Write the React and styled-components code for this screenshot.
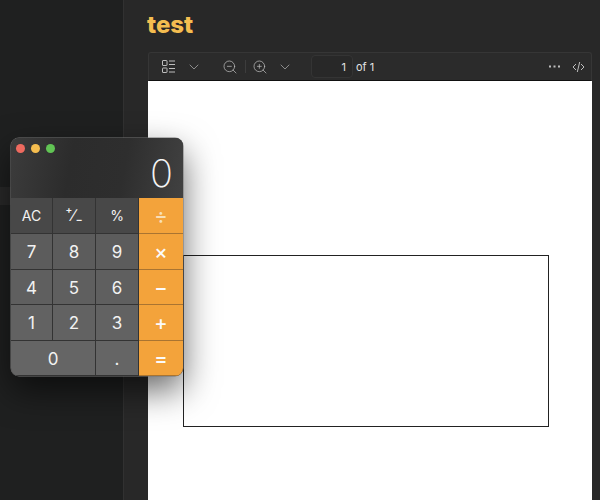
import React from "react";
import styled, { createGlobalStyle } from "styled-components";
import { ChevronDown, ZoomIn, ZoomOut } from "lucide-react";

const GlobalStyle = createGlobalStyle`
  html, body {
    margin: 0;
    padding: 0;
    background: #282828;
  }
  * {
    box-sizing: border-box;
  }
`;

const Page = styled.div`
  position: relative;
  width: 600px;
  height: 500px;
  overflow: hidden;
  display: flex;
  font-family: Inter, "Liberation Sans", sans-serif;
  background: #282828;
`;

const Sidebar = styled.div`
  width: 124px;
  height: 100%;
  flex: none;
  padding-top: 187px;
  background: #1f2020;
  border-right: 1px solid #313131;
`;

const SidebarRow = styled.div`
  height: 18px;
  background: #2a2a2a;
`;

const Main = styled.div`
  flex: 1;
  display: flex;
  flex-direction: column;
  padding: 0 8px 0 24px;
  min-width: 0;
`;

const Title = styled.h1`
  margin: 0 0 0 -1px;
  height: 52px;
  padding-top: 10px;
  font-size: 24px;
  line-height: 30px;
  font-weight: 800;
  color: #f4bd50;
`;

const Toolbar = styled.div`
  height: 29px;
  flex: none;
  display: flex;
  align-items: center;
  padding: 0 5px 0 11px;
  background: #2b2b2b;
  border: 1px solid #363636;
  border-bottom: 1px solid #111;
  border-radius: 3px 3px 0 0;
  color: #bdbdbd;
`;

const ToolIcon = styled.span`
  display: flex;
  align-items: center;
  justify-content: center;
  flex: none;
  width: 16px;
  margin-left: ${(p) => p.$ml || 0}px;
`;

const Divider = styled.span`
  width: 1px;
  height: 13px;
  flex: none;
  margin-left: 7px;
  background: #3d3d3d;
`;

const PageInput = styled.div`
  width: 42px;
  height: 23px;
  flex: none;
  margin-left: 18px;
  padding-right: 6px;
  display: flex;
  align-items: center;
  justify-content: flex-end;
  font-size: 11px;
  color: #e2e2e2;
  background: #282828;
  border: 1px solid #343434;
  border-radius: 4px;
`;

const PageCount = styled.span`
  margin-left: 3px;
  font-size: 11px;
  color: #e2e2e2;
`;

const Spacer = styled.span`
  flex: 1;
`;

const Sheet = styled.div`
  flex: 1;
  padding: 174px 43px 0 35px;
  background: #fff;
`;

const DrawnBox = styled.div`
  height: 172px;
  border: 1px solid #222;
`;

const CalcWindow = styled.div`
  position: absolute;
  left: 11px;
  top: 138px;
  width: 172px;
  height: 238px;
  display: flex;
  flex-direction: column;
  overflow: hidden;
  border-radius: 8px;
  background: #333;
  box-shadow: 0 0 0 0.5px #777, 0 14px 34px rgba(0, 0, 0, 0.6);
`;

const CalcHeader = styled.div`
  height: 60px;
  flex: none;
  display: flex;
  flex-direction: column;
  background: linear-gradient(100deg, #3c3c3c 0%, #2c2c2c 35%, #2e2e2e 65%, #414141 100%);
`;

const Lights = styled.div`
  display: flex;
  gap: 6px;
  padding: 6px 0 0 5px;
`;

const Light = styled.span`
  width: 9px;
  height: 9px;
  border-radius: 50%;
  background: ${(p) => p.$color};
`;

const Display = styled.div`
  flex: 1;
  padding-right: 10px;
  margin-top: -1px;
  text-align: right;
  font-size: 38px;
  line-height: 43px;
  font-weight: 200;
  color: #f4f4f4;
`;

const Keys = styled.div`
  flex: 1;
  display: grid;
  grid-template-columns: 42px 43px 43px 44px;
  grid-template-rows: 36px 36px 35px 36px 35px;
`;

const Key = styled.div`
  display: flex;
  align-items: center;
  justify-content: center;
  grid-column: span ${(p) => p.$span || 1};
  padding-top: ${(p) => (p.$size ? 0 : 1)}px;
  font-size: ${(p) => p.$size || 17}px;
  font-weight: 400;
  color: #f2f2f2;
  background: ${(p) => p.$bg};
  border-right: 1px solid #333;
  border-bottom: 1px solid #333;
`;

const OpKey = styled(Key)`
  padding-top: 1px;
  font-size: 20px;
  font-weight: 500;
  color: ${(p) => p.$ink || "#fbfbfb"};
  border-right: 0;
  background: #f3a33b;
  border-bottom: 1px solid #a97431;
`;

const keyRows = [
  [
    { id: "ac", label: "AC", size: 14, bg: "#484848" },
    { id: "sign", label: "⁺∕₋", size: 17, bg: "#484848" },
    { id: "pct", label: "%", size: 14, bg: "#484848" },
    { id: "div", label: "÷", op: true, ink: "#f8dfb6" },
  ],
  [
    { id: "7", label: "7", bg: "#5c5c5c" },
    { id: "8", label: "8", bg: "#5c5c5c" },
    { id: "9", label: "9", bg: "#5c5c5c" },
    { id: "mul", label: "×", op: true },
  ],
  [
    { id: "4", label: "4", bg: "#5f5f5f" },
    { id: "5", label: "5", bg: "#5f5f5f" },
    { id: "6", label: "6", bg: "#5f5f5f" },
    { id: "sub", label: "−", op: true },
  ],
  [
    { id: "1", label: "1", bg: "#626262" },
    { id: "2", label: "2", bg: "#626262" },
    { id: "3", label: "3", bg: "#626262" },
    { id: "add", label: "+", op: true },
  ],
  [
    { id: "0", label: "0", bg: "#656565", span: 2 },
    { id: "dot", label: ".", bg: "#656565" },
    { id: "eq", label: "=", op: true },
  ],
];

const ThumbnailsIcon = () => (
  <svg width="13" height="13" viewBox="0 0 13 13" fill="none" stroke="currentColor" strokeWidth="1">
    <rect x="0.5" y="0.5" width="4.5" height="5" rx="0.5" />
    <rect x="0.5" y="8" width="4.5" height="4.5" rx="0.5" />
    <path d="M7 1h6M7 4.5h6M7 8.5h6M7 12h6" />
  </svg>
);

const MoreIcon = () => (
  <svg width="11" height="3" viewBox="0 0 11 3" fill="currentColor">
    <rect x="0" y="0.5" width="2" height="2" />
    <rect x="4.5" y="0.5" width="2" height="2" />
    <rect x="9" y="0.5" width="2" height="2" />
  </svg>
);

const CodeIcon = () => (
  <svg width="13" height="12" viewBox="0 0 13 12" fill="none" stroke="currentColor" strokeWidth="1">
    <path d="M4 3 1 6l3 3M9 3l3 3-3 3M7.7 1 5.3 11" />
  </svg>
);

const App = () => {
  return (
    <>
      <GlobalStyle />
      <Page>
        <Sidebar>
          <SidebarRow />
        </Sidebar>
        <Main>
          <Title>test</Title>
          <Toolbar>
            <ToolIcon>
              <ThumbnailsIcon />
            </ToolIcon>
            <ToolIcon $ml={10}>
              <ChevronDown size={18} strokeWidth={1} />
            </ToolIcon>
            <ToolIcon $ml={20}>
              <ZoomOut size={16} strokeWidth={1.1} />
            </ToolIcon>
            <Divider />
            <ToolIcon $ml={6}>
              <ZoomIn size={16} strokeWidth={1.1} />
            </ToolIcon>
            <ToolIcon $ml={9}>
              <ChevronDown size={18} strokeWidth={1} />
            </ToolIcon>
            <PageInput>1</PageInput>
            <PageCount>of 1</PageCount>
            <Spacer />
            <ToolIcon>
              <MoreIcon />
            </ToolIcon>
            <ToolIcon $ml={8}>
              <CodeIcon />
            </ToolIcon>
          </Toolbar>
          <Sheet>
            <DrawnBox />
          </Sheet>
        </Main>
        <CalcWindow>
          <CalcHeader>
            <Lights>
              <Light $color="#ee6a5f" />
              <Light $color="#f5bd4f" />
              <Light $color="#61c454" />
            </Lights>
            <Display>0</Display>
          </CalcHeader>
          <Keys>
            {keyRows.flat().map((key) =>
              key.op ? (
                <OpKey key={key.id} $ink={key.ink}>
                  {key.label}
                </OpKey>
              ) : (
                <Key key={key.id} $bg={key.bg} $size={key.size} $span={key.span}>
                  {key.label}
                </Key>
              )
            )}
          </Keys>
        </CalcWindow>
      </Page>
    </>
  );
};

export default App;
